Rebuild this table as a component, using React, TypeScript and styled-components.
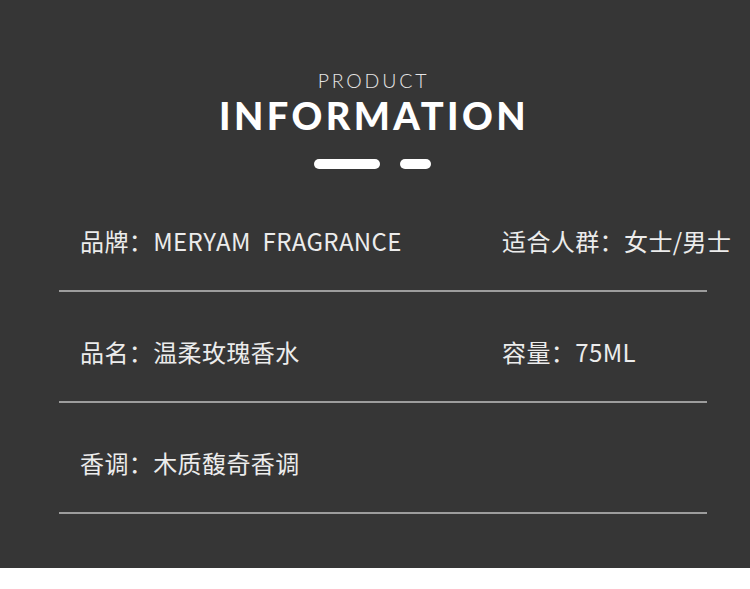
import React from "react";
import styled, { createGlobalStyle } from "styled-components";

const Global = createGlobalStyle`
  html, body { margin: 0; padding: 0; background: #ffffff; }
  body { font-family: "Noto Sans CJK SC", "Noto Sans", sans-serif; }
`;

const Panel = styled.section`
  background: #363636;
  height: 568px;
  width: 750px;
  box-sizing: border-box;
  padding-top: 69px;
  display: flex;
  flex-direction: column;
`;

const Header = styled.header`
  display: flex;
  flex-direction: column;
  align-items: center;
`;

const Kicker = styled.div`
  font-family: Lato, "Open Sans", sans-serif;
  font-weight: 300;
  font-size: 19.5px;
  line-height: 24px;
  letter-spacing: 2.8px;
  color: #e6e6e6;
  margin-right: 3px;
`;

const Title = styled.h1`
  margin: 2px 0 0;
  font-family: Lato, "Open Sans", sans-serif;
  font-weight: 900;
  font-size: 38px;
  line-height: 40px;
  letter-spacing: 3.4px;
  color: #ffffff;
  margin-right: 2px;
`;

const Dashes = styled.div`
  display: flex;
  gap: 20px;
  margin-top: 24px;
  margin-right: 5px;
`;

const Dash = styled.span<{ $w: number }>`
  display: block;
  width: ${(p) => p.$w}px;
  height: 10px;
  border-radius: 5px;
  background: #ffffff;
`;

const Table = styled.div`
  margin: 12px 43px 0 59px;
`;

const Row = styled.div`
  display: grid;
  grid-template-columns: 422px 1fr;
  padding: 45px 0 34px 21px;
  border-bottom: 2px solid #9d9d9d;
`;

const Cell = styled.div`
  font-size: 24px;
  line-height: 30px;
  letter-spacing: 0.4px;
  color: #ececec;
  white-space: pre;
`;

const rows: [string, string][] = [
  ["品牌：MERYAM  FRAGRANCE", "适合人群：女士/男士"],
  ["品名：温柔玫瑰香水", "容量：75ML"],
  ["香调：木质馥奇香调", ""],
];

export default function App() {
  return (
    <>
      <Global />
      <Panel>
        <Header>
          <Kicker>PRODUCT</Kicker>
          <Title>INFORMATION</Title>
          <Dashes>
            <Dash $w={66} />
            <Dash $w={31} />
          </Dashes>
        </Header>
        <Table>
          {rows.map(([a, b], i) => (
            <Row key={i}>
              <Cell>{a}</Cell>
              <Cell>{b}</Cell>
            </Row>
          ))}
        </Table>
      </Panel>
    </>
  );
}
